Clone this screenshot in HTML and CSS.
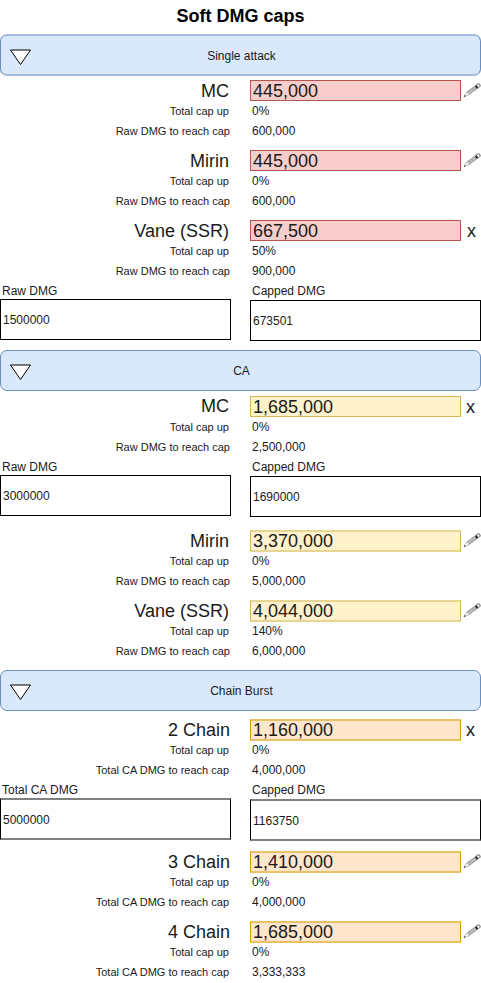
FILE: index.html
```html
<!DOCTYPE html>
<html lang="en">
<head>
<meta charset="utf-8">
<title>Soft DMG caps</title>
<link rel="stylesheet" href="styles.css">
</head>
<body>
<svg class="defs" aria-hidden="true">
  <symbol id="pencil" viewBox="0 0 18 16">
    <path d="M1 14.700 3.600 9.900 13.600 2.600Q15.800 1 17 2.600q.7 1.500-.9 2.800L6 12.700Z" fill="#fff" stroke="#888" stroke-width=".6"/>
    <path d="M4.400 10.700 12.800 4.500M5.500 12 13.800 5.900" fill="none" stroke="#999" stroke-width="1.200"/>
    <path d="M12.800 3.700 14.500 6.100" fill="none" stroke="#222" stroke-width="2"/>
    <path d="M13.700 2.600Q15.800 1 17 2.600q.7 1.500-.9 2.800" fill="none" stroke="#555" stroke-width=".7"/>
    <path d="M.8 14.900 1.500 13.300 2.700 14.100Z" fill="#222"/>
  </symbol>
  <symbol id="triangle" viewBox="0 0 22 17">
    <path d="M.5 1H20.500L10.500 15.500Z" fill="#fff" stroke="#000" stroke-width="1"/>
  </symbol>
</svg>
<main>
  <h1>Soft DMG caps</h1>

  <section class="single">
    <header class="bar"><svg class="tri"><use href="#triangle"/></svg><span>Single attack</span></header>
    <div class="group">
      <b>MC</b><output>445,000</output><svg class="pen"><use href="#pencil"/></svg>
      <span>Total cap up</span><em>0%</em>
      <span class="reach">Raw DMG to reach cap</span><em>600,000</em>
    </div>
    <div class="group">
      <b>Mirin</b><output>445,000</output><svg class="pen"><use href="#pencil"/></svg>
      <span>Total cap up</span><em>0%</em>
      <span class="reach">Raw DMG to reach cap</span><em>600,000</em>
    </div>
    <div class="group open">
      <b>Vane (SSR)</b><output>667,500</output><i>x</i>
      <span>Total cap up</span><em>50%</em>
      <span class="reach">Raw DMG to reach cap</span><em>900,000</em>
    </div>
    <div class="calc">
      <label>Raw DMG</label><label>Capped DMG</label>
      <div class="field">1500000</div><div class="field result">673501</div>
    </div>
  </section>

  <section class="ca">
    <header class="bar"><svg class="tri"><use href="#triangle"/></svg><span>CA</span></header>
    <div class="group open">
      <b>MC</b><output>1,685,000</output><i>x</i>
      <span>Total cap up</span><em>0%</em>
      <span class="reach">Raw DMG to reach cap</span><em>2,500,000</em>
    </div>
    <div class="calc">
      <label>Raw DMG</label><label>Capped DMG</label>
      <div class="field">3000000</div><div class="field result">1690000</div>
    </div>
    <div class="group soft">
      <b>Mirin</b><output>3,370,000</output><svg class="pen"><use href="#pencil"/></svg>
      <span>Total cap up</span><em>0%</em>
      <span class="reach">Raw DMG to reach cap</span><em>5,000,000</em>
    </div>
    <div class="group soft">
      <b>Vane (SSR)</b><output>4,044,000</output><svg class="pen"><use href="#pencil"/></svg>
      <span>Total cap up</span><em>140%</em>
      <span class="reach">Raw DMG to reach cap</span><em>6,000,000</em>
    </div>
  </section>

  <section class="chain">
    <header class="bar"><svg class="tri"><use href="#triangle"/></svg><span>Chain Burst</span></header>
    <div class="group open soft">
      <b>2 Chain</b><output>1,160,000</output><i>x</i>
      <span>Total cap up</span><em>0%</em>
      <span>Total CA DMG to reach cap</span><em>4,000,000</em>
    </div>
    <div class="calc">
      <label>Total CA DMG</label><label>Capped DMG</label>
      <div class="field">5000000</div><div class="field result">1163750</div>
    </div>
    <div class="group soft">
      <b>3 Chain</b><output>1,410,000</output><svg class="pen"><use href="#pencil"/></svg>
      <span>Total cap up</span><em>0%</em>
      <span>Total CA DMG to reach cap</span><em>4,000,000</em>
    </div>
    <div class="group soft">
      <b>4 Chain</b><output>1,685,000</output><svg class="pen"><use href="#pencil"/></svg>
      <span>Total cap up</span><em>0%</em>
      <span>Total CA DMG to reach cap</span><em>3,333,333</em>
    </div>
  </section>
</main>
</body>
</html>
```
FILE: styles.css
```css
* { box-sizing: border-box; }
body {
  margin: 0;
  background: #fff;
  color: #1a1a1a;
  font: 12px/20px "Liberation Sans", Arial, sans-serif;
}
main { width: 481px; height: 983px; overflow: hidden; }
.defs { position: absolute; width: 0; height: 0; }
h1 { margin: 0; height: 34px; color: #000; font-size: 18px; line-height: 32px; text-align: center; }

.bar {
  display: grid;
  grid-template-columns: 22px 1fr 22px;
  align-items: center;
  height: 41px;
  padding: 0 7px 0 9px;
  border: 1px solid #6c8ebf;
  border-radius: 7px;
  background: #dae8fc;
  text-align: center;
}
.tri { width: 22px; height: 17px; margin-top: 4px; }
.single .bar { height: 42px; border-width: 2px 1px; border-color: #a3bbde #6c8ebf; margin-bottom: 4px; }
.single .bar span { padding-top: 2px; }
.ca .bar { margin-bottom: 5px; }
.chain .bar { margin-bottom: 8px; }

.group {
  display: grid;
  grid-template-columns: 230px 20px 211px 20px;
  grid-template-rows: 21px 20px 20px;
  margin-bottom: 9px;
}
.group b, .group span { grid-column: 1; text-align: right; padding-right: 1px; }
.group b { font-weight: 400; font-size: 18px; line-height: 23px; }
.chain .group b { padding-right: 0; }
.group span { font-size: 11px; }
.group .reach { padding-right: 0; }
.group output, .group em { grid-column: 3; }
.group output {
  height: 21px;
  border: 1px solid;
  padding-left: 2px;
  font-size: 18px;
  line-height: 21px;
}
.group em { font-style: normal; padding-left: 2px; }
.group i { font-style: normal; font-size: 18px; line-height: 23px; padding-left: 5px; }
.single .group i { padding-left: 6px; }
.ca .group.open b { line-height: 21px; }
.pen { width: 18px; height: 16px; margin: 2px 0 0 2px; }
.group.open { margin-bottom: 0; }

.single output { background: #f8cecc; border-color: #b85450; }
.ca output { background: #fff2cc; border-color: #d6b656; }
.chain output { background: #ffe6cc; border-color: #d79b00; }
.soft output { height: 22px; border-width: 2px 1px; line-height: 18px; }
.ca .soft output { border-color: #ead491 #d6b656; }
.chain .soft output { border-color: #ebc066 #d79b00; }

.calc {
  display: grid;
  grid-template-columns: 231px 231px;
  grid-template-rows: 18px 42px;
  column-gap: 19px;
}
.calc label { padding-left: 2px; }
.field {
  height: 41px;
  border: 1px solid #000;
  padding-left: 2px;
  line-height: 40px;
}
.result { margin-top: 1px; }
.single .calc { margin-bottom: 9px; }
.ca .calc { margin-bottom: 13px; }
.chain .calc { margin-bottom: 10px; grid-template-rows: 18px 43px; }
.chain .field { height: 42px; border-width: 2px 1px; border-color: #808080 #000; line-height: 40px; }
```
